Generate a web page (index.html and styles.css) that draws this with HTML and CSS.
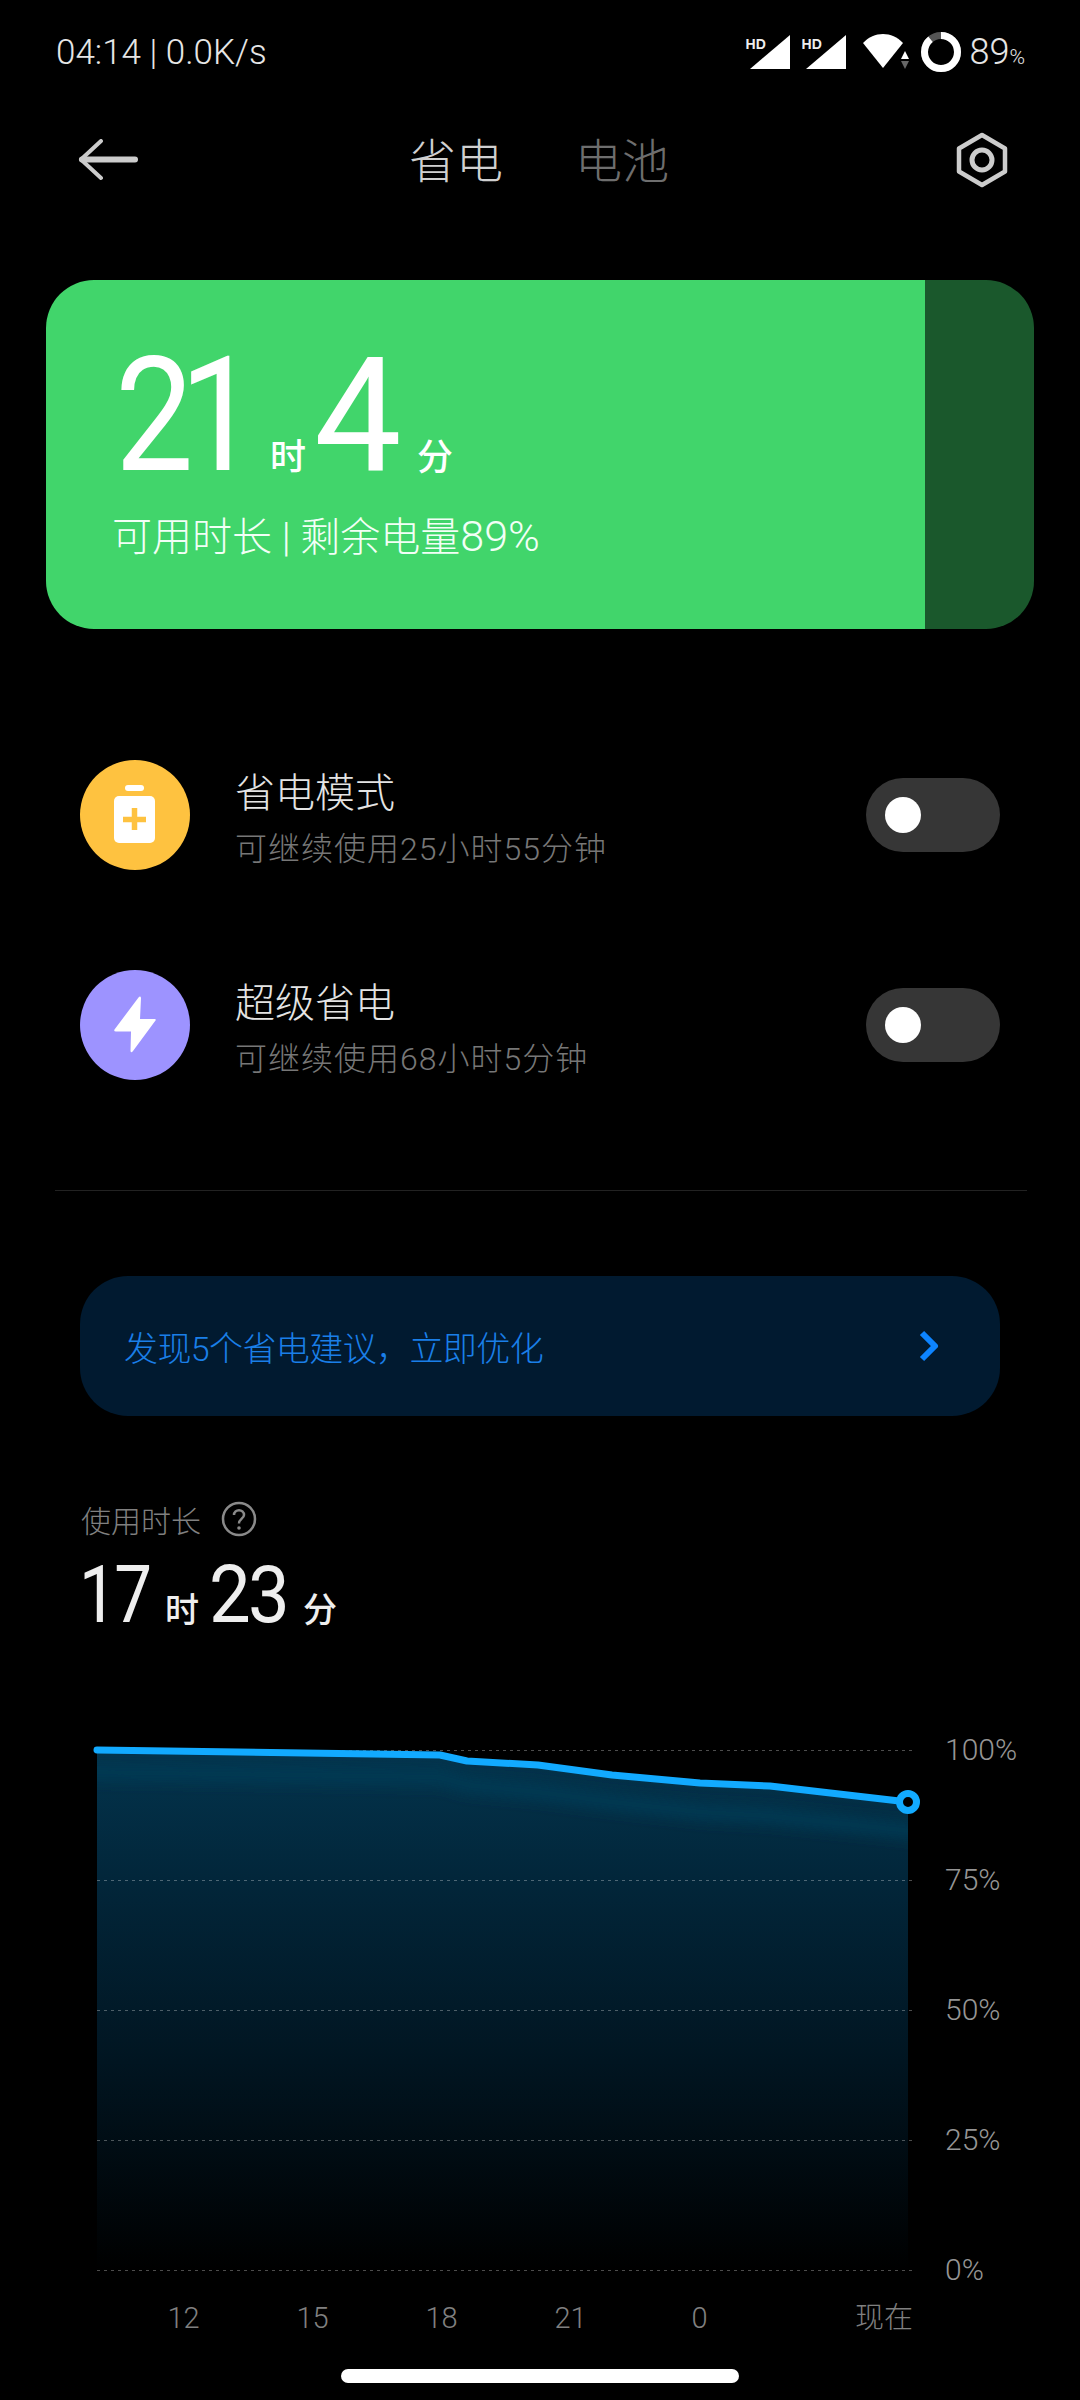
FILE: index.html
```html
<!DOCTYPE html>
<html lang="zh-CN">
<head>
<meta charset="utf-8">
<title>省电</title>
<link rel="stylesheet" href="styles.css">
</head>
<body>
<div class="page">
  <header class="status">
    <span class="status-time">04:14 | 0.0K/s</span>
    <div class="status-right">
      <div class="signal"><span class="hd">HD</span><svg class="tri" width="40" height="34" viewBox="0 0 40 34"><path d="M40 0V34H0Z"/></svg></div>
      <div class="signal"><span class="hd">HD</span><svg class="tri" width="40" height="34" viewBox="0 0 40 34"><path d="M40 0V34H0Z"/></svg></div>
      <svg class="wifi" width="48" height="36" viewBox="0 0 48 36"><path d="M0 9C11-3 29-3 40 9L20 34Z" fill="#fff"/><path d="M42 17l4 8h-8z" fill="#fff"/><path d="M38 27h8l-4 8z" fill="#666"/></svg>
      <svg class="ring" width="42" height="42" viewBox="0 0 42 42"><circle cx="21" cy="21" r="16.5" fill="none" stroke="#555" stroke-width="7"/><circle cx="21" cy="21" r="16.5" fill="none" stroke="#fff" stroke-width="7" pathLength="100" stroke-dasharray="89 11" transform="rotate(-90 21 21)"/></svg>
      <span class="batt">89<small>%</small></span>
    </div>
  </header>

  <nav class="nav">
    <svg class="back" width="60" height="42" viewBox="0 0 60 42"><path d="M4 20.5H57" stroke="#ccc" stroke-width="6" stroke-linecap="round" fill="none"/><path d="M23 2L3 20.5L23 39" stroke="#ccc" stroke-width="4" stroke-linecap="round" stroke-linejoin="round" fill="none"/></svg>
    <div class="tabs"><span class="tab tab-on">省电</span><span class="tab tab-off">电池</span></div>
    <svg class="gear" width="54" height="56" viewBox="0 0 54 56"><path d="M27 3L50 16.500V39.500L27 53L4 39.500V16.500Z" fill="none" stroke="#ccc" stroke-width="4.500" stroke-linejoin="round"/><circle cx="27" cy="28" r="10" fill="none" stroke="#ccc" stroke-width="5"/></svg>
  </nav>

  <section class="card">
    <div class="card-fill">
      <div class="remain"><span class="big big-h">21</span><span class="unit unit-a">时</span><span class="big big-m">4</span><span class="unit unit-b">分</span></div>
      <p class="card-sub">可用时长 | 剩余电量<span class="pct">89%</span></p>
    </div>
    <div class="card-rest"></div>
  </section>

  <section class="modes">
    <div class="mode">
      <div class="mode-icon icon-yellow">
        <svg width="44" height="60" viewBox="0 0 44 60"><rect x="12" y="0" width="19" height="6" rx="3" fill="#fff"/><rect x="1" y="11" width="41" height="47" rx="5" fill="#fff"/><path d="M21.500 23V45M10 34.500H33" stroke="#fec240" stroke-width="5.500" fill="none"/></svg>
      </div>
      <div class="mode-text"><div class="mode-title">省电模式</div><div class="mode-sub">可继续使用25小时55分钟</div></div>
      <div class="toggle"><span class="knob"></span></div>
    </div>
    <div class="mode">
      <div class="mode-icon icon-purple">
        <svg width="44" height="60" viewBox="0 0 44 60"><path d="M25.500 2.500L1.500 34.500Q0.500 36.500 3 36.500H18L17.500 56Q18 58.500 20 56L42.500 25.500Q43.500 24 41.500 24H27L28 3Q27.500 0.500 25.500 2.500Z" fill="#fff"/></svg>
      </div>
      <div class="mode-text"><div class="mode-title">超级省电</div><div class="mode-sub">可继续使用68小时5分钟</div></div>
      <div class="toggle"><span class="knob"></span></div>
    </div>
  </section>

  <hr class="divider">

  <a class="tip">
    <span class="tip-text">发现5个省电建议，立即优化</span>
    <svg width="22" height="32" viewBox="0 0 22 32"><path d="M4 3L17 16L4 29" fill="none" stroke="#0d84ff" stroke-width="6" stroke-linejoin="round"/></svg>
  </a>

  <section class="usage">
    <div class="usage-label"><span>使用时长</span>
      <svg width="36" height="36" viewBox="0 0 36 36"><circle cx="18" cy="18" r="16" fill="none" stroke="#8a8a8a" stroke-width="2.500"/><path d="M13 14C13 7.500 23 7.500 23 14C23 17.500 18 18 18 22.500" fill="none" stroke="#8a8a8a" stroke-width="2.500"/><circle cx="18" cy="27" r="1.800" fill="#8a8a8a"/></svg>
    </div>
    <div class="usage-time"><span class="mid mid-h">17</span><span class="munit munit-a">时</span><span class="mid mid-m">23</span><span class="munit">分</span></div>
  </section>

  <section class="chart">
    <svg class="plot" width="850" height="548" viewBox="80 1736 850 548">
      <defs>
        <linearGradient id="fill" x1="0" y1="1750" x2="0" y2="2270" gradientUnits="userSpaceOnUse">
          <stop offset="0" stop-color="#03344d"/>
          <stop offset=".25" stop-color="#02263a"/>
          <stop offset=".6" stop-color="#011521"/>
          <stop offset="1" stop-color="#000"/>
        </linearGradient>
        <filter id="soft" x="-5%" y="-200%" width="110%" height="500%"><feGaussianBlur stdDeviation="7"/></filter>
        <clipPath id="areaclip"><path d="M97 1750L440 1755L467 1761L538 1765L612 1775L700 1783L770 1786L908 1802V2270H97Z"/></clipPath>
      </defs>
      <path d="M97 1750L440 1755L467 1761L538 1765L612 1775L700 1783L770 1786L908 1802V2270H97Z" fill="url(#fill)"/>
      <g clip-path="url(#areaclip)"><path d="M80 1772L440 1777L467 1785L538 1792L612 1802L700 1812L770 1816L920 1832" fill="none" stroke="#043a55" stroke-width="14" filter="url(#soft)"/></g>
      <g class="grid">
        <path d="M97 1750.500H913"/><path d="M97 1880.500H913"/><path d="M97 2010.500H913"/><path d="M97 2140.500H913"/><path d="M97 2270.500H913"/>
      </g>
      <path d="M97 1750L440 1755L467 1761L538 1765L612 1775L700 1783L770 1786L908 1802" fill="none" stroke="#12aaff" stroke-width="7" stroke-linecap="round" stroke-linejoin="round"/>
      <circle cx="908" cy="1802" r="8.500" fill="#000" stroke="#12aaff" stroke-width="7"/>
    </svg>
    <div class="y-axis"><span>100%</span><span>75%</span><span>50%</span><span>25%</span><span>0%</span></div>
  </section>
  <div class="x-axis"><span>12</span><span>15</span><span>18</span><span>21</span><span>0</span><span class="now">现在</span></div>
  <div class="home"></div>
</div>
</body>
</html>
```

FILE: styles.css
```css
* { box-sizing: border-box; }
html, body { margin: 0; padding: 0; background: #000; }
body { font-family: Roboto, "Noto Sans CJK SC", sans-serif; font-weight: 300; color: #fff; }
.page { width: 1080px; height: 2400px; overflow: hidden; background: #000; }

.status { height: 104px; display: flex; align-items: center; justify-content: space-between; padding: 0 55px 0 56px; }
.status-time { font-size: 35px; color: #e6e6e6; }
.status-right { display: flex; align-items: center; }
.signal { position: relative; width: 44px; height: 34px; margin-right: 12px; display: flex; justify-content: flex-end; }
.tri { fill: #fff; }
.hd { position: absolute; left: 0; top: 2px; font: 700 14px/14px "Liberation Sans", sans-serif; color: #eee; background: #000; padding-right: 2px; }
.wifi { margin-left: 5px; margin-right: 9px; }
.ring { margin-right: 8px; }
.batt { font-size: 36px; color: #e6e6e6; }
.batt small { font-size: 21px; }

.nav { height: 112px; position: relative; display: flex; align-items: center; justify-content: space-between; padding: 0 71px 0 78px; }
.tabs { position: absolute; left: 409px; top: 34px; display: flex; gap: 72px; }
.tab { font-size: 47px; line-height: 47px; }
.tab-on { color: #d0d0d0; }
.tab-off { color: #6e6e6e; }

.card { width: 988px; height: 349px; margin: 64px 0 0 46px; border-radius: 48px; overflow: hidden; display: flex; }
.card-fill { width: 879px; background: #41d56b; padding: 71px 0 0 69px; }
.card-rest { flex: 1; background: #1a582c; }
.remain { display: flex; align-items: baseline; height: 130px; }
.big { display: inline-block; font-size: 159px; line-height: 130px; font-weight: 400; transform-origin: 0 50%; }
.big-h { width: 155px; letter-spacing: -16px; transform: scaleX(.88); }
.big-m { width: 89px; transform: scaleX(.98); }
.unit { font-size: 36px; font-weight: 500; font-family: "Noto Sans CJK SC", sans-serif; line-height: 36px; }
.unit-a { margin: 0 8px 0 0; }
.unit-b { margin-left: 14px; }
.card-sub { margin: 33px 0 0 -3px; font-size: 40px; line-height: 44px; color: #f2fff6; }
.pct { font-size: 43px; }

.modes { margin: 131px 80px 0; display: flex; flex-direction: column; gap: 100px; }
.mode { height: 110px; display: flex; align-items: center; }
.mode-icon { width: 110px; height: 110px; border-radius: 50%; display: flex; align-items: center; justify-content: center; }
.icon-yellow { background: #fec240; }
.icon-purple { background: #9d93ff; }
.mode-text { flex: 1; margin-left: 45px; padding-top: 8px; }
.mode-title { font-size: 40px; line-height: 50px; color: #e4e4e4; }
.mode-sub { font-size: 32px; line-height: 40px; margin-top: 10px; color: #777; letter-spacing: 1px; }
.toggle { width: 134px; height: 74px; border-radius: 37px; background: #363636; padding: 19px; }
.knob { display: block; width: 36px; height: 36px; border-radius: 50%; background: #fff; }

.divider { margin: 110px 53px 0 55px; height: 1px; border: 0; background: #222; }

.tip { height: 140px; margin: 85px 80px 0; padding: 0 60px 0 44px; border-radius: 48px; background: #011a30; display: flex; align-items: center; justify-content: space-between; }
.tip-text { font-size: 34px; letter-spacing: -.6px; color: #1a7fe8; }

.usage { margin: 85px 0 0 81px; }
.usage-label { display: flex; align-items: center; gap: 20px; height: 36px; font-size: 30px; color: #808080; }
.usage-time { display: flex; align-items: baseline; margin: 24px 0 0 -2px; height: 68px; }
.mid { display: inline-block; font-size: 79px; line-height: 68px; font-weight: 400; transform-origin: 0 50%; color: #eee; }
.mid-h { width: 86px; letter-spacing: -3px; transform: scaleX(.85); }
.mid-m { width: 94px; letter-spacing: -3px; transform: scaleX(.94); }
.munit { font-size: 34px; font-weight: 500; font-family: "Noto Sans CJK SC", sans-serif; color: #eee; }
.munit-a { margin-right: 10px; }

.chart { display: flex; margin: 107px 0 0 80px; }
.grid path { stroke: #fff; stroke-opacity: .3; stroke-width: 1; stroke-dasharray: 3 4; fill: none; }
.plot { display: block; }
.y-axis { margin-left: 15px; display: flex; flex-direction: column; gap: 102px; }
.y-axis span { height: 28px; line-height: 28px; font-size: 30px; color: #959595; }

.x-axis { width: 833px; margin: 14px 0 0 80px; padding-left: 39px; display: grid; grid-template-columns: repeat(5, 129px) 1fr; text-align: center; font-size: 29px; line-height: 40px; color: #808080; }
.now { text-align: right; }
.home { width: 398px; height: 14px; margin: 31px auto 0; border-radius: 7px; background: #fff; }
```
